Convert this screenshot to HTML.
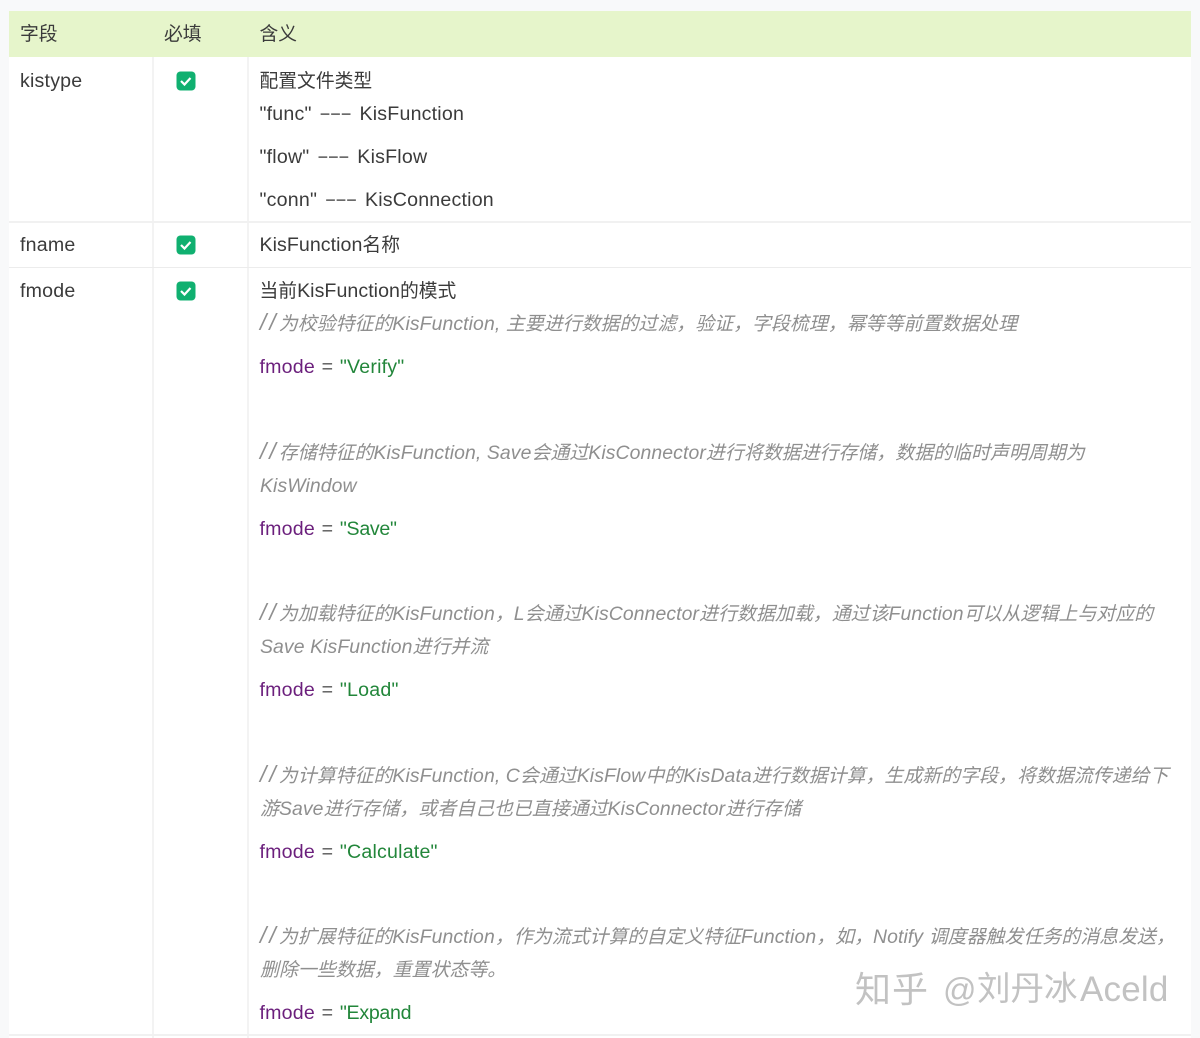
<!DOCTYPE html>
<html><head><meta charset="utf-8">
<style>
html,body{margin:0;padding:0;width:1200px;height:1038px;overflow:hidden;background:#f8f9fa}
body{position:relative;font-family:"Liberation Sans","Noto Sans CJK SC",sans-serif;font-size:18.8px;color:#3b3b3b}
#w{position:absolute;left:0;top:0;width:1200px;height:1038px;filter:blur(.35px)}
.b{position:absolute}
.t{position:absolute;white-space:nowrap;line-height:24px;height:24px;letter-spacing:0}
.l{font-size:19.6px;letter-spacing:.2px;word-spacing:1px}
span.l{line-height:0}
.n{letter-spacing:.05px}
.c{color:#8f8f8f;font-style:italic;font-size:18.95px;margin-top:1px}
.c .l,.c.l{font-size:19.4px;letter-spacing:.1px;word-spacing:0}
.c.l{margin-top:0}
.h{letter-spacing:3px;font-size:23px;line-height:0}
.d{font-size:18px;letter-spacing:0;margin:0 1.500px}
.k{color:#6b1f7c}.s{color:#22863a}.e{color:#555}
.wm{position:absolute;top:967px;line-height:46px;color:#c2c2c2;white-space:nowrap}
svg{position:absolute}
</style></head><body><div id="w">
<div class="b" style="left:9px;top:11px;width:1182px;height:1027px;background:#fff"></div>
<div class="b" style="left:9px;top:11px;width:1182px;height:46px;background:#e6f5cb"></div>
<div class="b" style="left:152px;top:57px;width:1.500px;height:981px;background:#f3f3f3"></div>
<div class="b" style="left:247px;top:57px;width:1.500px;height:981px;background:#f3f3f3"></div>
<div class="b" style="left:9px;top:221px;width:1182px;height:2px;background:#f1f1f1"></div>
<div class="b" style="left:9px;top:267px;width:1182px;height:1px;background:#ececec"></div>
<div class="b" style="left:9px;top:1034px;width:1182px;height:2px;background:#f1f1f1"></div>

<div class="t" style="left:20px;top:22px">字段</div>
<div class="t" style="left:164px;top:22px">必填</div>
<div class="t" style="left:259.500px;top:22px">含义</div>

<div class="t l" style="left:20px;top:69px">kistype</div>
<div class="t l" style="left:20px;top:233px">fname</div>
<div class="t l" style="left:20px;top:279px">fmode</div>

<svg style="left:176px;top:71px" width="20" height="20" viewBox="0 0 20 20"><rect width="19" height="19" x=".5" y=".5" rx="4" fill="#10b070"/><path d="M5 10l3.500 3.500L14.500 7" fill="none" stroke="#fff" stroke-width="2.200"/></svg>
<svg style="left:176px;top:235px" width="20" height="20" viewBox="0 0 20 20"><rect width="19" height="19" x=".5" y=".5" rx="4" fill="#10b070"/><path d="M5 10l3.500 3.500L14.500 7" fill="none" stroke="#fff" stroke-width="2.200"/></svg>
<svg style="left:176px;top:281px" width="20" height="20" viewBox="0 0 20 20"><rect width="19" height="19" x=".5" y=".5" rx="4" fill="#10b070"/><path d="M5 10l3.500 3.500L14.500 7" fill="none" stroke="#fff" stroke-width="2.200"/></svg>

<div class="t" style="left:259.500px;top:69px">配置文件类型</div>
<div class="t l" style="left:259.500px;top:102px">"func" <span class="d">−−−</span> KisFunction</div>
<div class="t l" style="left:259.500px;top:145px">"flow" <span class="d">−−−</span> KisFlow</div>
<div class="t l" style="left:259.500px;top:188px">"conn" <span class="d">−−−</span> KisConnection</div>
<div class="t" style="left:259.500px;top:233px"><span class="l n">KisFunction</span>名称</div>
<div class="t" style="left:259.500px;top:279px">当前<span class="l n">KisFunction</span>的模式</div>

<div class="t c" style="left:260px;top:312px"><span class="h">//</span>为校验特征的<span class="l">KisFunction, </span>主要进行数据的过滤，验证，字段梳理，幂等等前置数据处理</div>
<div class="t l e" style="left:259.500px;top:355px"><span class="k">fmode</span> = <span class="s">"Verify"</span></div>

<div class="t c" style="left:260px;top:441px"><span class="h">//</span>存储特征的<span class="l">KisFunction, Save</span>会通过<span class="l">KisConnector</span>进行将数据进行存储，数据的临时声明周期为</div>
<div class="t c l" style="left:260px;top:474px">KisWindow</div>
<div class="t l e" style="left:259.500px;top:517px"><span class="k">fmode</span> = <span class="s" style="letter-spacing:-.3px">"Save"</span></div>

<div class="t c" style="left:260px;top:602px"><span class="h">//</span>为加载特征的<span class="l">KisFunction</span>，<span class="l">L</span>会通过<span class="l">KisConnector</span>进行数据加载，通过该<span class="l">Function</span>可以从逻辑上与对应的</div>
<div class="t c" style="left:260px;top:635px"><span class="l">Save KisFunction</span>进行并流</div>
<div class="t l e" style="left:259.500px;top:678px"><span class="k">fmode</span> = <span class="s">"Load"</span></div>

<div class="t c" style="left:260px;top:764px"><span class="h">//</span>为计算特征的<span class="l">KisFunction, C</span>会通过<span class="l">KisFlow</span>中的<span class="l">KisData</span>进行数据计算，生成新的字段，将数据流传递给下</div>
<div class="t c" style="left:260px;top:797px">游<span class="l">Save</span>进行存储，或者自己也已直接通过<span class="l">KisConnector</span>进行存储</div>
<div class="t l e" style="left:259.500px;top:840px"><span class="k">fmode</span> = <span class="s">"Calculate"</span></div>

<div class="t c" style="left:260px;top:925px"><span class="h">//</span>为扩展特征的<span class="l">KisFunction</span>，作为流式计算的自定义特征<span class="l">Function</span>，如，<span class="l">Notify </span>调度器触发任务的消息发送，</div>
<div class="t c" style="left:260px;top:958px">删除一些数据，重置状态等。</div>
<div class="t l e" style="left:259.500px;top:1001px"><span class="k">fmode</span> = <span class="s" style="letter-spacing:-.3px">"Expand</span></div>

<div class="wm" style="left:855px;font-size:36px;letter-spacing:1px">知乎</div>
<div class="wm" style="left:943px;font-size:33px">@</div>
<div class="wm" style="left:977px;font-size:33.500px">刘丹冰</div>
<div class="wm" style="left:1080px;font-size:35px;letter-spacing:.2px">Aceld</div>
</div></body></html>
